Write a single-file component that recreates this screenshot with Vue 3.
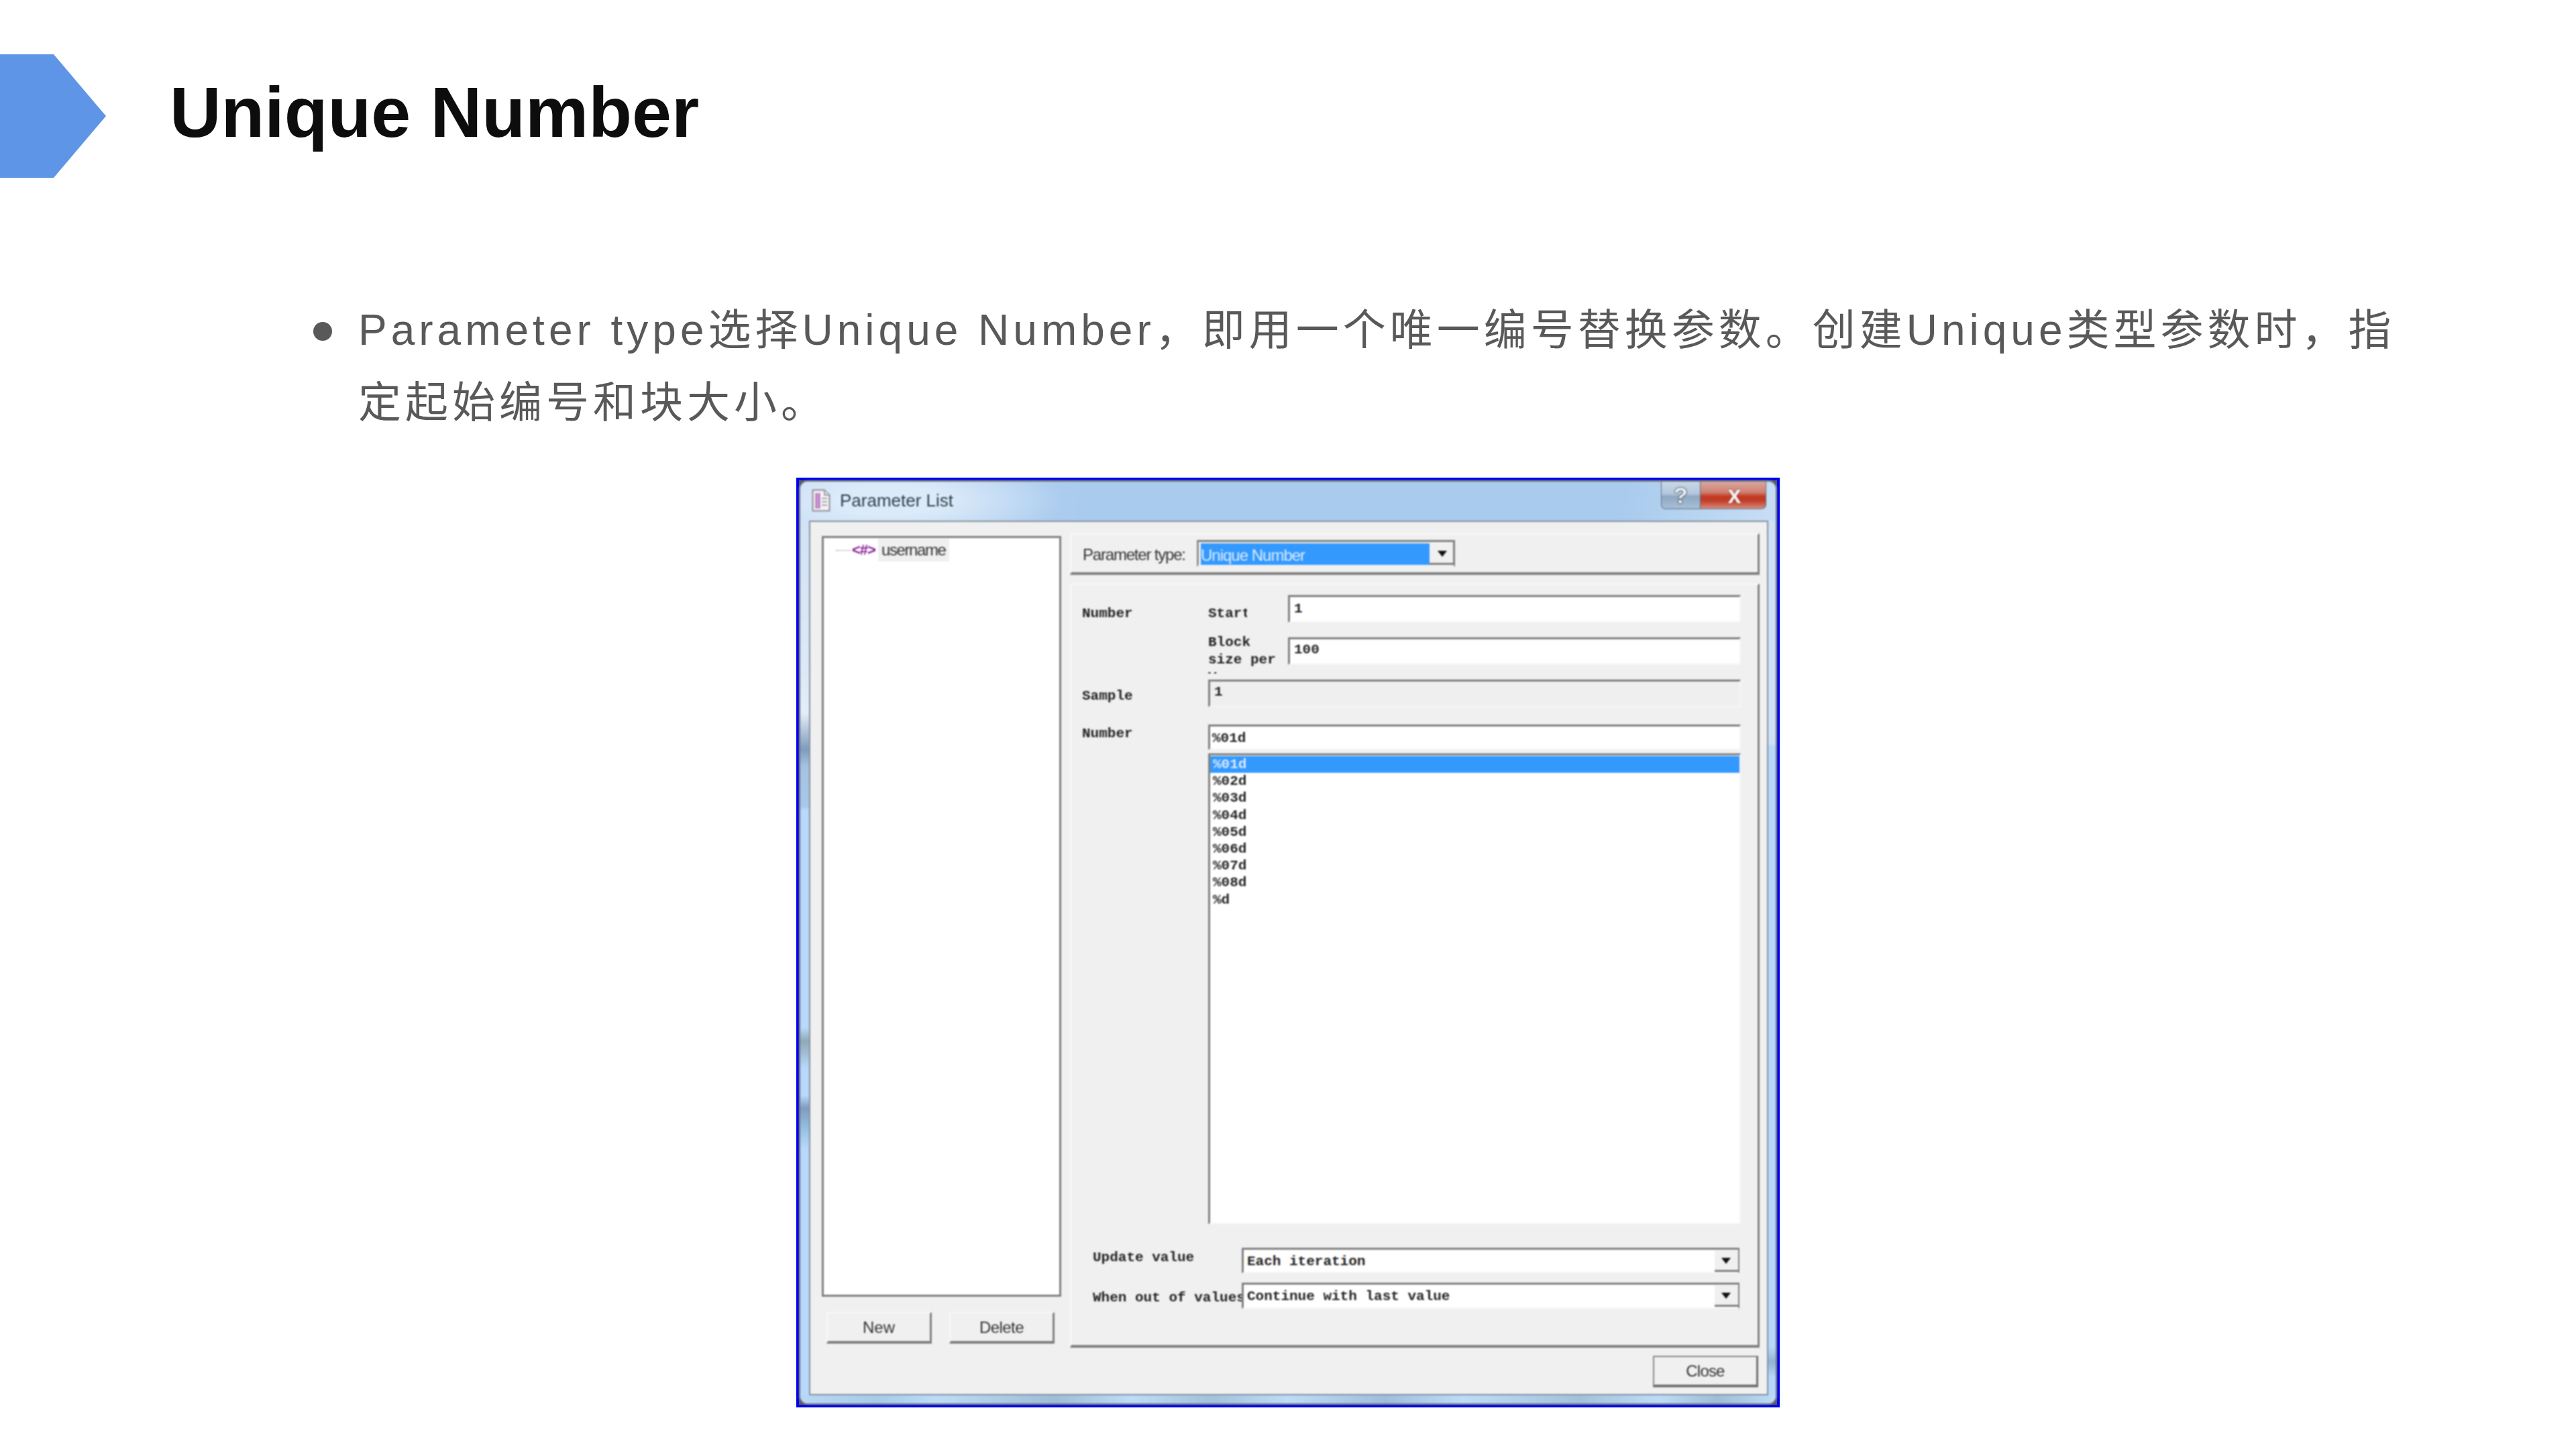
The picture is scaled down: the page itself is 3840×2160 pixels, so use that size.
<template>
  <div class="page">
    <header class="head">
      <svg class="hex" width="158" height="184" viewBox="0 0 158 184">
        <polygon points="0,0 80,0 158,92 80,184 0,184" fill="#5e95e6" />
      </svg>
      <h1>Unique Number</h1>
    </header>

    <div class="bullet">
      <i class="dot"></i>
      <p>Parameter type选择Unique Number，即用一个唯一编号替换参数。创建Unique类型参数时，指定起始编号和块大小。</p>
    </div>

    <div class="window">
      <div class="frame">
        <div class="titlebar">
          <svg class="doc" width="28" height="34" viewBox="0 0 28 34">
            <path d="M1.500 1.500H19L26.500 9V32.500H1.500Z" fill="#f4f2f4" stroke="#8d8d96" stroke-width="2" />
            <path d="M19 1.500V9H26.500" fill="#dcdce2" stroke="#8d8d96" stroke-width="1.500" />
            <path d="M7 6V29M11 6V29" stroke="#b66ec0" stroke-width="3" />
            <path d="M15 14H23M15 19H23M15 24H23" stroke="#a8a8b0" stroke-width="2" />
          </svg>
          <span class="wintitle">Parameter List</span>
          <div class="controls">
            <span class="help">?</span>
            <span class="close">x</span>
          </div>
        </div>

        <div class="body">
          <div class="leftcol">
            <div class="tree sunken">
              <div class="node">
                <span class="dots"></span>
                <span class="tag">&lt;#&gt;</span>
                <span class="name">username</span>
              </div>
            </div>
            <div class="leftbtns">
              <button class="btn">New</button>
              <button class="btn del">Delete</button>
            </div>
          </div>

          <div class="rightcol">
            <div class="pane typepane">
              <span class="typelbl">Parameter type:</span>
              <div class="typecombo sunken">
                <span class="typeval">Unique Number</span>
                <span class="arrowbtn"></span>
              </div>
            </div>

            <div class="pane main">
              <div class="row r-start">
                <span class="lbl">Number</span>
                <span class="sub clip">Start</span>
                <div class="field sunken">1</div>
              </div>
              <div class="row r-block">
                <span class="lbl"></span>
                <span class="sub blocksize">Block size per Vuser</span>
                <div class="field sunken">100</div>
              </div>
              <div class="row r-sample">
                <span class="lbl">Sample</span>
                <div class="field wide sunken gray">1</div>
              </div>
              <div class="row r-format">
                <span class="lbl">Number</span>
                <div class="formatcol">
                  <div class="field formatval sunken">%01d</div>
                  <div class="list sunken">
                    <div v-for="(f, i) in formats" :key="f" class="item" :class="{ sel: i === 0 }">{{ f }}</div>
                  </div>
                </div>
              </div>
              <div class="row r-update">
                <span class="longlbl">Update value</span>
                <div class="select sunken">
                  <span>Each iteration</span>
                  <span class="arrowbtn"></span>
                </div>
              </div>
              <div class="row r-when">
                <span class="longlbl">When out of values</span>
                <div class="select sunken">
                  <span>Continue with last value</span>
                  <span class="arrowbtn"></span>
                </div>
              </div>
            </div>

            <div class="closerow">
              <button class="btn closebtn">Close</button>
            </div>
          </div>
        </div>
        <div class="bottomstrip"></div>
      </div>
    </div>
  </div>
</template>

<script setup>
const formats = ['%01d', '%02d', '%03d', '%04d', '%05d', '%06d', '%07d', '%08d', '%d']
</script>

<style>
html, body {
  margin: 0;
  background: #fff;
}
</style>

<style scoped>
.page {
  width: 3840px;
  height: 2160px;
  overflow: hidden;
  background: #fff;
  font-family: "Liberation Sans", "Noto Sans CJK SC", sans-serif;
}

.head {
  display: flex;
  align-items: center;
  gap: 95px;
  padding-top: 81px;
}

.hex {
  display: block;
  flex: none;
}

h1 {
  margin: 0 0 12px;
  font-size: 106px;
  font-weight: 700;
  color: #0d0d0d;
  line-height: 1;
}

.bullet {
  display: flex;
  margin: 173px 0 0 467px;
  width: 3114px;
}

.dot {
  flex: none;
  width: 28px;
  height: 28px;
  margin: 42px 39px 0 0;
  border-radius: 50%;
  background: #595959;
}

.bullet p {
  margin: 0;
  font-size: 64px;
  line-height: 108px;
  letter-spacing: 6px;
  color: #595959;
}

.window {
  box-sizing: border-box;
  width: 1466px;
  height: 1386px;
  margin: 58px auto 0;
  border: 4px solid #0000f0;
  background: #555a60;
}

.frame {
  box-sizing: border-box;
  height: 100%;
  border: 2px solid #6b7480;
  border-radius: 13px;
  overflow: hidden;
  display: flex;
  flex-direction: column;
  filter: blur(0.8px);
  background:
    linear-gradient(180deg,
      #cfe1f6 0, #dde9f7 284px, #e4eefa 345px, #7f9bbb 399px, #a6c2e2 424px, #a9c8ea 484px,
      #b9d8fa 490px, #b9d8fa 814px, #8fa9b8 834px, #b9d8fa 874px, #b9d8fa 915px, #7f9cbd 934px,
      #95c0e2 964px, #b9d8fa 994px, #b9d8fa 100%) left top / 20px 100% no-repeat,
    linear-gradient(180deg,
      #cfe1f6 0, #cfe1f6 390px, #b7d7fb 396px, #b7d7fb 1290px, #8fb4d4 1312px, #b7d7fb 1334px);
}

.titlebar {
  flex: none;
  height: 58px;
  display: flex;
  padding: 11px 14px 0 17px;
  box-sizing: border-box;
  background:
    radial-gradient(ellipse 260px 70px at 130px 28px, #dcebfa 30%, rgba(220, 235, 250, 0) 100%),
    linear-gradient(100deg, #c4daf2 0, #a9cbee 30%, #a9cbee 84%, #c8def5 100%);
}

.doc {
  flex: none;
  margin-right: 14px;
}

.wintitle {
  font-size: 26px;
  line-height: 34px;
  color: #33404c;
}

.controls {
  margin: -11px 0 0 auto;
  display: flex;
  height: 41px;
}

.help, .close {
  box-sizing: border-box;
  display: flex;
  align-items: center;
  justify-content: center;
  height: 41px;
  border: 1px solid #5f6f80;
  border-top: none;
  font-family: "Liberation Sans", sans-serif;
  font-weight: 700;
}

.help {
  width: 58px;
  border-radius: 0 0 0 7px;
  border-right: none;
  font-size: 34px;
  color: #eef2f6;
  text-shadow: 0 0 1px #1f2b38, 0 0 2px #1f2b38, 0 0 2px #1f2b38;
  background: linear-gradient(180deg, #c8d8e8 0, #b4c8dc 45%, #8ea8c2 55%, #a8bfd6 100%);
}

.close {
  width: 99px;
  padding-left: 4px;
  border-radius: 0 0 7px 0;
  font-size: 36px;
  line-height: 1;
  color: #f4f4f4;
  text-shadow: 0 0 2px #5a1a10;
  background: linear-gradient(180deg, #d8a8a0 0, #cf7f72 40%, #c43a22 55%, #c03c28 70%, #d88a7c 100%);
}

.body {
  flex: 1;
  min-height: 0;
  margin: 0 11px 0 13px;
  box-sizing: border-box;
  padding: 17px 11px 0 17px;
  display: flex;
  gap: 13px;
  background: #f0f0f0;
  border: 2px solid #84929f;
}

.bottomstrip {
  flex: none;
  height: 12px;
  background: linear-gradient(90deg,
    #b9d8f6 0, #a8cbe8 8%, #bcdcf8 14%, #9dbdd8 26%, #bcdcf8 34%, #a2c2dc 42%, #bcdcf8 50%,
    #9ebedb 60%, #bcdcf8 68%, #a2c2dc 80%, #bcdcf8 88%, #9dbdd8 94%, #bcdcf8 100%);
}

.sunken {
  box-sizing: border-box;
  border-style: solid;
  border-width: 3px 2px 2px 3px;
  border-color: #808080 #f6f6f6 #f6f6f6 #808080;
  background: #fff;
}

.leftcol {
  flex: none;
  width: 357px;
  padding-top: 4px;
}

.tree {
  height: 1134px;
  border-right: 3px solid #808080;
  border-bottom: 3px solid #808080;
  padding: 1px 0 0 18px;
}

.node {
  display: flex;
  align-items: center;
  height: 34px;
}

.dots {
  width: 22px;
  border-top: 1px dotted #777;
  margin-right: 2px;
}

.tag {
  width: 36px;
  font-size: 22px;
  font-weight: 700;
  letter-spacing: -1px;
  color: #8a1a96;
}

.name {
  margin-left: 3px;
  padding: 0 5px;
  height: 34px;
  line-height: 34px;
  background: #f0f0f0;
  font-size: 24px;
  letter-spacing: -1.400px;
  color: #333;
}

.leftbtns {
  display: flex;
  gap: 26px;
  margin-top: 23px;
  padding-left: 7px;
}

.btn {
  box-sizing: border-box;
  width: 157px;
  height: 47px;
  padding: 0;
  border-style: solid;
  border-width: 2px 3px 4px 2px;
  border-color: #f8f8f8 #808080 #808080 #f8f8f8;
  background: #f0f0f0;
  font-family: "Liberation Sans", sans-serif;
  font-size: 24px;
  color: #333;
}

.del {
  letter-spacing: -0.600px;
}

.rightcol {
  flex: none;
  width: 1028px;
}

.pane {
  box-sizing: border-box;
  border-style: solid;
  border-width: 2px 3px 4px 2px;
  border-color: #f8f8f8 #808080 #808080 #f8f8f8;
}

.typepane {
  height: 62px;
  display: flex;
  align-items: center;
  padding-left: 17px;
}

.typelbl {
  width: 170px;
  padding-top: 4px;
  font-size: 24px;
  letter-spacing: -1.200px;
  color: #333;
}

.typecombo {
  width: 385px;
  height: 40px;
  display: flex;
  align-items: center;
  justify-content: space-between;
  padding: 2px 0 0 3px;
  border-width: 3px 3px 3px 3px;
  border-color: #808080;
  border-left-color: #909090;
  border-bottom-color: #f0f0f0;
  background: #f4f4f4;
}

.typeval {
  width: 341px;
  height: 32px;
  line-height: 35px;
  background: #3399ff;
  color: #dcecff;
  font-size: 24px;
  letter-spacing: -1px;
}

.arrowbtn {
  flex: none;
  position: relative;
  box-sizing: border-box;
  width: 35px;
  height: 32px;
  background: #f0f0f0;
  border-bottom: 3px solid #808080;
}

.arrowbtn::after {
  content: "";
  position: absolute;
  left: 10px;
  top: 11px;
  border-style: solid;
  border-width: 9px 7px 0;
  border-color: #111 transparent transparent;
}

.typecombo .arrowbtn::after {
  left: 12px;
}

.main {
  height: 1139px;
  margin-top: 13px;
  padding: 15px 0 0 16px;
  font-family: "Liberation Mono", monospace;
  font-size: 21px;
  font-weight: 700;
  line-height: 26px;
  color: #222;
}

.row {
  display: flex;
  align-items: flex-start;
}

.lbl {
  flex: none;
  width: 188px;
  margin-top: 15px;
}

.sub {
  flex: none;
  width: 119px;
  margin-top: 15px;
}

.clip {
  width: 58px;
  margin-right: 61px;
  overflow: hidden;
  white-space: nowrap;
}

.field {
  width: 675px;
  height: 41px;
  padding: 3px 0 0 6px;
}

.r-start .field {
  padding-top: 5px;
}

.wide {
  width: 794px;
}

.gray {
  background: #efefef;
}

.r-block {
  margin-top: 22px;
  height: 41px;
}

.blocksize {
  width: 105px;
  margin: -5px 14px 0 0;
  height: 59px;
  overflow: hidden;
}

.r-block .lbl {
  margin-top: 0;
}

.r-sample {
  margin-top: 22px;
}

.r-sample .lbl {
  margin-top: 12px;
}

.r-format {
  margin-top: 26px;
}

.r-format .lbl {
  margin-top: 1px;
}

.formatcol {
  display: flex;
  flex-direction: column;
  gap: 5px;
}

.formatval {
  width: 794px;
  height: 38px;
  padding: 5px 0 0 3px;
}

.list {
  width: 794px;
  height: 702px;
  padding-top: 1px;
}

.item {
  height: 25.200px;
  line-height: 25.200px;
  padding-left: 4px;
}

.sel {
  background: #3399ff;
  color: #dcecff;
}

.r-update {
  margin-top: 35px;
}

.r-when {
  margin-top: 14px;
}

.longlbl {
  flex: none;
  width: 222px;
  margin-left: 16px;
  margin-top: 2px;
  overflow: hidden;
  white-space: nowrap;
}

.r-when .longlbl {
  margin-top: 10px;
}

.select {
  flex: none;
  width: 742px;
  height: 38px;
  display: flex;
  justify-content: space-between;
  padding: 5px 0 0 5px;
  border-right-color: #808080;
}

.select .arrowbtn {
  margin-top: -4px;
}

.r-when .select {
  height: 39px;
}

.closerow {
  display: flex;
  justify-content: flex-end;
  margin-top: 12px;
  padding-right: 2px;
}

.closebtn {
  border-color: #8a8a8a #707070 #707070 #8a8a8a;
  letter-spacing: -0.800px;
}
</style>
